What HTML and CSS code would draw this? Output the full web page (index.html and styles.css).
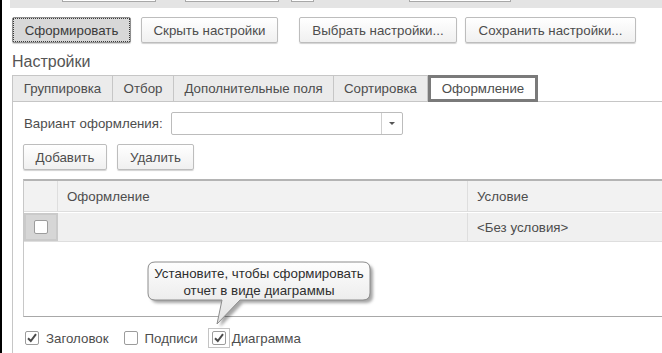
FILE: index.html
```html
<!DOCTYPE html>
<html lang="ru">
<head>
    <meta charset="UTF-8">
    <title>Настройки отчета</title>
    <link rel="stylesheet" href="styles.css">
</head>
<body>
    <div class="window">
        <div class="top-strip">
            <span class="edge e1"></span>
            <span class="edge e2"></span>
            <span class="edge e3"></span>
            <span class="edge e4"></span>
        </div>

        <div class="toolbar">
            <button class="btn btn-main w-form">Сформировать</button>
            <button class="btn w-hide">Скрыть настройки</button>
            <button class="btn w-choose">Выбрать настройки...</button>
            <button class="btn w-save">Сохранить настройки...</button>
        </div>

        <div class="section-title">Настройки</div>

        <div class="tabs">
            <div class="tab t1">Группировка</div>
            <div class="tab t2">Отбор</div>
            <div class="tab t3">Дополнительные поля</div>
            <div class="tab t4">Сортировка</div>
            <div class="tab tab-active t5">Оформление</div>
            <div class="tab-rest"></div>
        </div>

        <div class="panel">
            <div class="field-row">
                <span class="field-label">Вариант оформления:</span>
                <div class="select">
                    <span class="select-value"></span>
                    <span class="select-btn"><span class="arrow"></span></span>
                </div>
            </div>

            <div class="actions">
                <button class="btn w-add">Добавить</button>
                <button class="btn w-del">Удалить</button>
            </div>

            <div class="grid">
                <div class="grid-row grid-head">
                    <div class="cell c-check"></div>
                    <div class="cell c-name">Оформление</div>
                    <div class="cell c-cond">Условие</div>
                </div>
                <div class="grid-row grid-item">
                    <div class="cell c-check c-selected"><span class="box"></span></div>
                    <div class="cell c-name"></div>
                    <div class="cell c-cond">&lt;Без условия&gt;</div>
                </div>
            </div>

            <div class="options">
                <label class="option">
                    <span class="box checked">
                        <svg width="12" height="12" viewBox="0 0 12 12"><path d="M2 6.2 L4.8 9 L10 2.2" fill="none" stroke="#4a4a4a" stroke-width="2"/></svg>
                    </span>
                    Заголовок
                </label>
                <label class="option">
                    <span class="box"></span>
                    Подписи
                </label>
                <label class="option opt-chart">
                    <span class="focus">
                        <span class="box checked">
                            <svg width="12" height="12" viewBox="0 0 12 12"><path d="M2 6.2 L4.8 9 L10 2.2" fill="none" stroke="#4a4a4a" stroke-width="2"/></svg>
                        </span>
                    </span>
                    Диаграмма
                </label>
            </div>
        </div>

        <!-- callout over the chart checkbox -->
        <svg class="callout" width="240" height="76" viewBox="0 0 240 76">
            <defs>
                <linearGradient id="bubbleFill" x1="0" y1="0" x2="0" y2="1">
                    <stop offset="0" stop-color="#fefefe"/>
                    <stop offset="1" stop-color="#e2e2e2"/>
                </linearGradient>
                <filter id="blur" x="-10%" y="-20%" width="120%" height="140%">
                    <feGaussianBlur stdDeviation="1.6"/>
                </filter>
            </defs>
            <path d="M10 4 H218 Q225 4 225 11 V35 Q225 42 218 42 H95 L72 66 L77 42 H10 Q3 42 3 35 V11 Q3 4 10 4 Z"
                  fill="rgba(0,0,0,0.35)" transform="translate(3,3)" filter="url(#blur)"/>
            <path d="M10 4 H218 Q225 4 225 11 V35 Q225 42 218 42 H95 L72 66 L77 42 H10 Q3 42 3 35 V11 Q3 4 10 4 Z"
                  fill="url(#bubbleFill)" stroke="#8c8c8c" stroke-width="1"/>
        </svg>
        <div class="callout-text">Установите, чтобы сформировать<br>отчет в виде диаграммы</div>
    </div>
</body>
</html>
```

FILE: styles.css
```css
body {
    margin: 0;
    padding: 0;
    background: #fff;
    font-family: "Liberation Sans", Arial, sans-serif;
    font-size: 13.3px;
    color: #4d4d4d;
    overflow: hidden;
}
.window {
    position: relative;
    height: 353px;
    border-left: 2px solid #000;
    overflow: hidden;
}

/* strip left from the form above */
.top-strip {
    display: flex;
    align-items: flex-start;
    height: 8px;
    margin-left: 8px;
    background: #e4e4e4;
}
.edge {
    height: 1px;
    background: #fff;
    border: 1px solid #a8a8a8;
    border-top: none;
}
.e1 { margin-left: 52px; width: 92px; }
.e2 { margin-left: 29px; width: 92px; }
.e3 { margin-left: 12px; width: 21px; }
.e4 { margin-left: 95px; width: 100px; }

/* buttons */
.btn {
    height: 26px;
    padding: 0;
    font-family: inherit;
    font-size: 13.3px;
    color: #4d4d4d;
    background: linear-gradient(#ffffff, #f0f0f0);
    border: 1px solid #bdbdbd;
    border-radius: 2px;
    box-shadow: 0 1px 1px rgba(0, 0, 0, 0.18);
    text-align: center;
}
.btn-main {
    background: #d8d8d8;
    border-color: #8f8f8f;
    outline: 1px dotted #3a3a3a;
    outline-offset: -2px;
    color: #3a3a3a;
}
.toolbar {
    display: flex;
    padding: 9px 0 0 10px;
}
.w-form { width: 119px; }
.w-hide { width: 137px; margin-left: 10px; }
.w-choose { width: 158px; margin-left: 21px; }
.w-save { width: 171px; margin-left: 8px; }

.section-title {
    margin: 10px 0 4px 10px;
    font-size: 16px;
    line-height: 18px;
    color: #555;
}

/* tabs */
.tabs {
    display: flex;
    height: 27px;
    padding-left: 10px;
}
.tab {
    box-sizing: border-box;
    height: 27px;
    line-height: 25px;
    text-align: center;
    background: #ebebeb;
    border: 1px solid #c6c6c6;
    border-left: none;
}
.t1 { width: 101px; border-left: 1px solid #c6c6c6; }
.t2 { width: 61px; }
.t3 { width: 160px; }
.t4 { width: 94px; }
.t5 { width: 110px; }
.tab-active {
    background: #fff;
    border: 3px solid #7a7a7a;
    line-height: 21px;
}
.tab-rest {
    flex: 1;
    border-bottom: 1px solid #c6c6c6;
}

/* panel */
.panel {
    margin-left: 10px;
    height: 250px;
    padding: 10px 0 0 10px;
    border-left: 1px solid #c6c6c6;
    border-bottom: 1px solid #c6c6c6;
}
.field-row {
    display: flex;
    align-items: center;
}
.field-label {
    width: 147px;
    padding-left: 1px;
}
.select {
    box-sizing: border-box;
    display: flex;
    width: 232px;
    height: 23px;
    border: 1px solid #bcbcbc;
    border-radius: 2px;
}
.select-value {
    flex: 1;
}
.select-btn {
    width: 20px;
    display: flex;
    align-items: center;
    justify-content: center;
    border-left: 1px solid #cfcfcf;
}
.arrow {
    width: 0;
    height: 0;
    border-left: 3px solid transparent;
    border-right: 3px solid transparent;
    border-top: 3px solid #555;
}
.actions {
    display: flex;
    margin-top: 9px;
}
.w-add { width: 84px; }
.w-del { width: 77px; margin-left: 10px; }

/* grid */
.grid {
    box-sizing: border-box;
    margin-top: 9px;
    height: 138px;
    border-top: 2px solid #b4b4b4;
    border-left: 1px solid #c8c8c8;
    border-bottom: 1px solid #a8a8a8;
}
.grid-row {
    display: flex;
}
.grid-head {
    height: 30px;
    background: #f2f2f2;
    border-bottom: 1px solid #dedede;
}
.grid-item {
    height: 28px;
    background: #f0f0f0;
    border-top: 1px solid #fff;
    border-bottom: 1px solid #dedede;
}
.cell {
    box-sizing: border-box;
    display: flex;
    align-items: center;
}
.c-check {
    width: 34px;
    justify-content: center;
    border-right: 1px solid #dedede;
}
.c-name {
    width: 410px;
    padding-left: 9px;
    border-right: 1px solid #dedede;
}
.c-cond {
    flex: 1;
    padding-left: 9px;
}
.c-selected {
    background: #d6d6d6;
    border: 2px solid #cacaca;
}
.box {
    box-sizing: border-box;
    display: inline-flex;
    align-items: center;
    justify-content: center;
    width: 14px;
    height: 14px;
    background: #fff;
    border: 1px solid #9c9c9c;
    border-radius: 2px;
}

/* checkbox row */
.options {
    display: flex;
    align-items: center;
    padding: 11px 0 0 2px;
}
.option {
    display: flex;
    align-items: center;
    gap: 7px;
}
.option + .option {
    margin-left: 15px;
}
.opt-chart {
    margin-left: 10px !important;
    gap: 2px;
}
.focus {
    display: inline-flex;
    padding: 2px 3px;
    border: 1px solid #c4c4c4;
}

/* callout */
.callout {
    position: absolute;
    left: 143px;
    top: 258px;
}
.callout-text {
    position: absolute;
    left: 146px;
    top: 265px;
    width: 222px;
    text-align: center;
    line-height: 17px;
    color: #2e2e2e;
}
```
